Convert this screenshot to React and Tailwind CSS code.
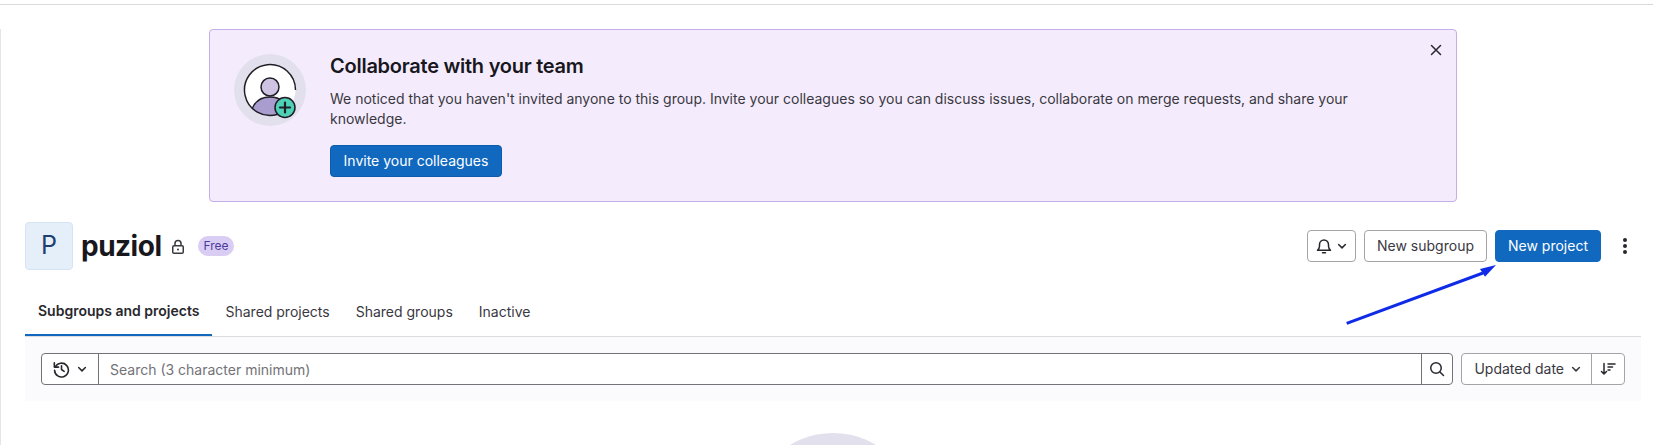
import React from "react";

const Btn = ({ children, className = "" }) => (
  <button className={`h-8 flex items-center justify-center rounded border text-sm ${className}`}>{children}</button>
);

const Chevron = () => (
  <svg width="12" height="12" viewBox="0 0 16 16" fill="none" stroke="currentColor" strokeWidth="2" strokeLinecap="round" strokeLinejoin="round"><path d="M3.5 6l4.5 4.5L12.5 6" /></svg>
);

const Tab = ({ children, active }) => (
  <div className={`h-[46px] pb-[3px] px-[13px] flex items-center text-sm ${active ? "font-semibold text-[#28272d] border-b-2 border-[#1068bf] -mb-px" : "text-[#3a383f]"}`}>{children}</div>
);

export default function App() {
  return (
    <div className="h-[445px] w-[1653px] overflow-hidden bg-white font-['Inter',sans-serif] text-[#3a383f] pt-1 relative">
      <div className="h-px bg-[#d9d9d9]" />
      <div className="h-full border-l border-[#e4e4ea] pl-6 pr-3">
        <div className="ml-[184px] mt-6 w-[1248px] h-[173px] rounded border border-[#c5aee8] bg-[#f4ecfd] flex pl-6 pt-6 relative">
          <svg width="72" height="72" viewBox="0 0 72 72" className="shrink-0">
            <circle cx="36" cy="36" r="36" fill="#e3e0ee" />
            <circle cx="36" cy="36" r="25.5" fill="#fff" />
            <path d="M18.5 54c3-7 9-11 17.5-11 5 0 9 1 12 4l-4 13c-3 1-5 1.5-8 1.5-7 0-13-2.500-17.500-7.500z" fill="#a99ccf" />
            <path d="M18.500 54c3-7 9-11 17.500-11 5 0 9 1 12 4" fill="none" stroke="#1f1e24" strokeWidth="1.500" />
            <circle cx="36" cy="33" r="9" fill="#cfc3e3" stroke="#1f1e24" strokeWidth="1.500" />
            <path d="M44 60.200A25.500 25.500 0 1 1 61.500 36" fill="none" stroke="#1f1e24" strokeWidth="1.500" />
            <circle cx="51" cy="53.500" r="10" fill="#4fd1b8" stroke="#1f1e24" strokeWidth="1.500" />
            <path d="M46 53.500h10M51 48.500v10" stroke="#1f1e24" strokeWidth="2.200" strokeLinecap="round" />
          </svg>
          <div className="ml-6">
            <h2 className="text-[20px] leading-[28px] font-semibold text-[#18171d] mt-[-2px] tracking-[-0.25px]">Collaborate with your team</h2>
            <p className="text-sm leading-5 mt-[9px] w-[1040px]">We noticed that you haven't invited anyone to this group. Invite your colleagues so you can discuss issues, collaborate on merge requests, and share your knowledge.</p>
            <Btn className="mt-4 w-[172px] bg-[#1068bf] border-[#0b5cad] text-white">Invite your colleagues</Btn>
          </div>
          <svg width="16" height="16" viewBox="0 0 16 16" className="absolute right-[12px] top-[12px]" fill="none" stroke="#28272d" strokeWidth="1.5" strokeLinecap="round"><path d="M3.500 3.500l9 9M12.500 3.500l-9 9" /></svg>
        </div>

        <div className="mt-5 h-12 w-[1616px] flex items-center">
          <div className="w-12 h-12 rounded border border-[#d5e3f2] bg-[#e4eff9] flex items-center justify-center text-[25px] text-[#1f3f70]">P</div>
          <h1 className="ml-[8px] text-[28px] leading-none font-bold text-[#18171d] tracking-[-0.5px]">puziol</h1>
          <svg width="16" height="16" viewBox="0 0 16 16" className="ml-[9px] mt-0.5" fill="none" stroke="#3a383f" strokeWidth="1.5"><rect x="2.750" y="6.750" width="10.500" height="7.500" rx="1.250" /><path d="M5 6.500V4.500a3 3 0 0 1 6 0v2" /><circle cx="8" cy="10.500" r="1" fill="#3a383f" stroke="none" /></svg>
          <span className="ml-3 h-5 px-[5px] rounded-full bg-[#dacdf4] text-[#4b3a9c] text-xs flex items-center">Free</span>
          <div className="ml-auto flex items-center">
            <Btn className="w-[49px] gap-1 bg-white border-[#a4a3a8] text-[#28272d]">
              <svg width="16" height="16" viewBox="0 0 16 16" fill="none" stroke="currentColor" strokeWidth="1.5" strokeLinejoin="round"><path d="M1.500 12.250h13c-1.200-1.200-2-2.200-2-4V6.500a4.500 4.500 0 0 0-9 0v1.750c0 1.800-.8 2.800-2 4z" /><path d="M6.500 14.750h3" strokeLinecap="round" /></svg>
              <Chevron />
            </Btn>
            <Btn className="ml-2 w-[123px] bg-white border-[#a4a3a8] text-[#3a383f]">New subgroup</Btn>
            <Btn className="ml-2 w-[106px] bg-[#1068bf] border-[#1068bf] text-white">New project</Btn>
            <svg width="16" height="16" viewBox="0 0 16 16" className="ml-4 mr-2" fill="#28272d"><circle cx="8" cy="2" r="2" /><circle cx="8" cy="8" r="2" /><circle cx="8" cy="14" r="2" /></svg>
          </div>
        </div>

        <div className="mt-5 w-[1616px] flex border-b border-[#dcdcde]">
          <Tab active>Subgroups and projects</Tab>
          <Tab>Shared projects</Tab>
          <Tab>Shared groups</Tab>
          <Tab>Inactive</Tab>
        </div>

        <div className="w-[1616px] h-16 bg-[#fbfafd] flex items-center pl-4 pr-4">
          <div className="flex-1 h-8 flex rounded border border-[#737278] bg-white">
            <div className="w-[57px] border-r border-[#737278] flex items-center justify-center gap-1.5 pl-px text-[#28272d]">
              <svg width="17" height="17" viewBox="0 0 16 16" fill="none" stroke="currentColor" strokeWidth="1.5" strokeLinecap="round" strokeLinejoin="round"><path d="M2.200 5.600A6.500 6.500 0 1 1 1.500 8.800" /><path d="M1.250 1.750v4h4" /><path d="M8 4.500V8l2.500 1.750" /></svg>
              <Chevron />
            </div>
            <div className="flex-1 pl-[11px] pt-px flex items-center text-sm text-[#737278]">Search (3 character minimum)</div>
            <div className="w-[31px] border-l border-[#737278] flex items-center justify-center text-[#28272d]">
              <svg width="16" height="16" viewBox="0 0 16 16" fill="none" stroke="currentColor" strokeWidth="1.5" strokeLinecap="round"><circle cx="7" cy="7" r="5.250" /><path d="M11 11l3.500 3.500" /></svg>
            </div>
          </div>
          <div className="ml-2 w-[164px] h-8 flex rounded border border-[#a4a3a8] bg-white">
            <div className="flex-1 border-r border-[#a4a3a8] flex items-center justify-end pr-[9px] gap-1.5 text-sm text-[#3a383f]">Updated date <Chevron /></div>
            <div className="w-[32px] flex items-center justify-center text-[#28272d]">
              <svg width="16" height="16" viewBox="0 0 16 16" fill="none" stroke="currentColor" strokeWidth="1.5" strokeLinecap="round" strokeLinejoin="round"><path d="M4 2.500v10.500M1.500 10.500L4 13l2.500-2.500" /><path d="M8 3h7M8 6h4.500M8 9h2" /></svg>
            </div>
          </div>
        </div>

        <div className="w-[1616px] flex justify-center pt-8">
          <div className="w-[166px] h-[166px] shrink-0 rounded-full bg-[#e3e0ee]" />
        </div>
      </div>

      <svg width="170" height="75" viewBox="0 0 170 75" className="absolute left-[1340px] top-[258px]">
        <path d="M6.700 65.300L143 15" stroke="#0f2be8" strokeWidth="3" />
        <path d="M156 7L140 11 145 18.700z" fill="#0f2be8" />
      </svg>
    </div>
  );
}
